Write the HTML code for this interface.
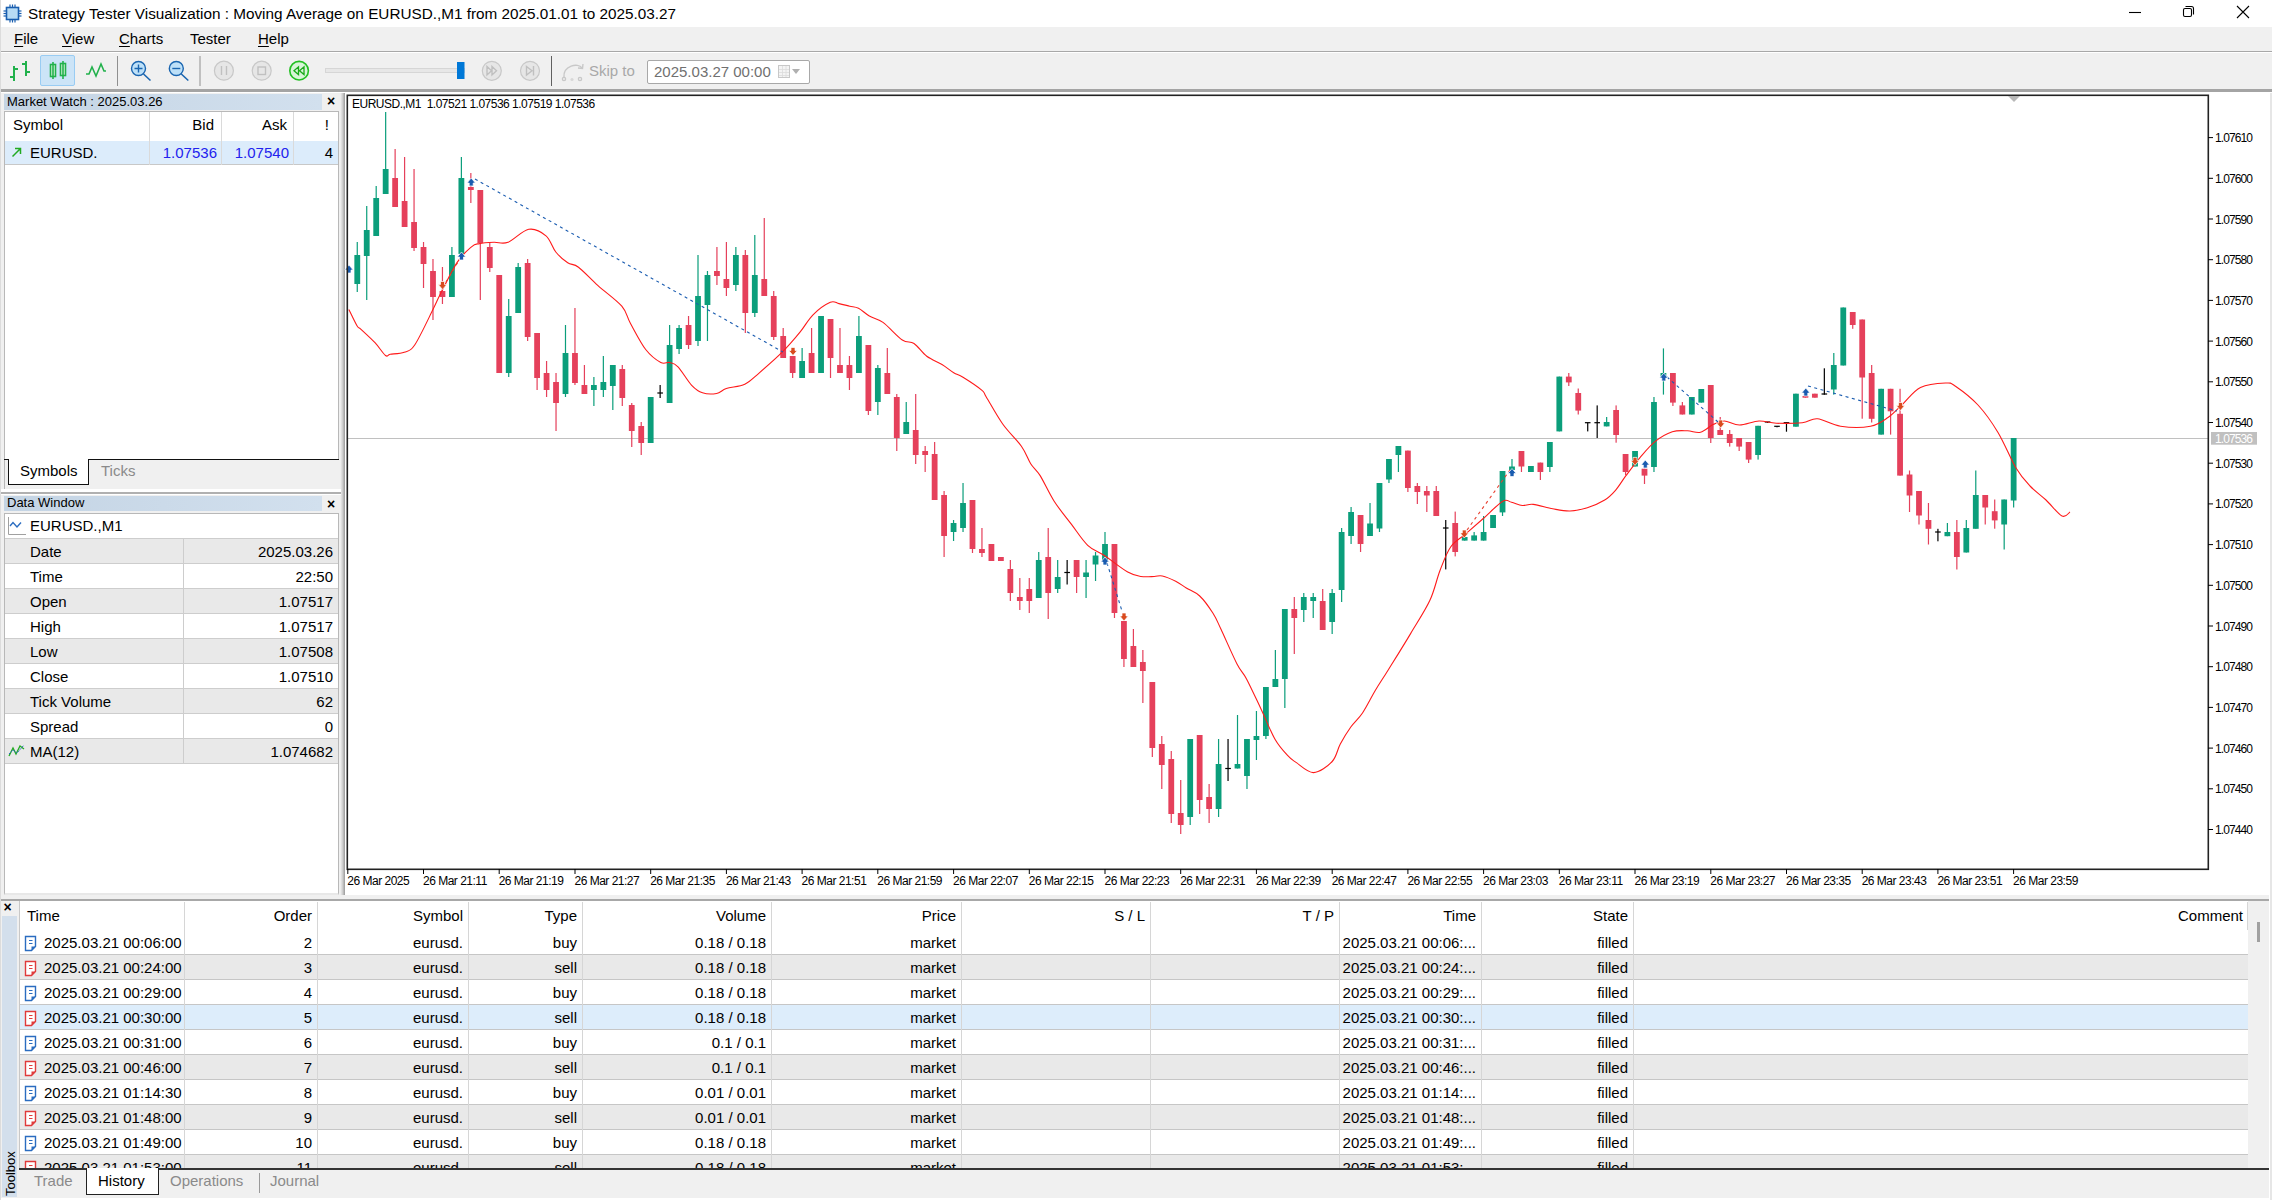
<!DOCTYPE html>
<html><head><meta charset="utf-8"><style>
*{margin:0;padding:0;box-sizing:border-box}
html,body{width:2272px;height:1200px;overflow:hidden;background:#f0f0f0;font-family:"Liberation Sans",sans-serif;color:#000}
.a{position:absolute}
.chart{position:absolute;left:0;top:0;pointer-events:none}
.ax{font-family:"Liberation Sans",sans-serif;font-size:12px;letter-spacing:-0.5px;fill:#000}
#title{left:0;top:0;width:2272px;height:27px;background:#fff}
#title .t{left:28px;top:5px;font-size:15.3px;white-space:nowrap}
.menu{top:30px;font-size:15px;white-space:nowrap}
.menu u{text-decoration:underline;text-decoration-thickness:1px;text-underline-offset:2px}
.tb{position:absolute;white-space:nowrap}
.ui{font-size:15px;white-space:nowrap;position:absolute}
.row{position:absolute;height:25px}

.ax.px{letter-spacing:-0.9px}

</style></head><body>
<div class="a" id="title">
  <svg class="a" style="left:3px;top:4px" width="19" height="19" viewBox="0 0 19 19">
    <rect x="3.5" y="3.5" width="12" height="12" fill="#b8dcf5" stroke="#1a5fb0" stroke-width="1.6"/>
    <g stroke="#1a5fb0" stroke-width="1.2">
      <line x1="7" y1="0.5" x2="7" y2="3.5"/><line x1="9.5" y1="0.5" x2="9.5" y2="3.5"/><line x1="12" y1="0.5" x2="12" y2="3.5"/>
      <line x1="7" y1="15.5" x2="7" y2="18.5"/><line x1="9.5" y1="15.5" x2="9.5" y2="18.5"/><line x1="12" y1="15.5" x2="12" y2="18.5"/>
      <line x1="0.5" y1="7" x2="3.5" y2="7"/><line x1="0.5" y1="9.5" x2="3.5" y2="9.5"/><line x1="0.5" y1="12" x2="3.5" y2="12"/>
      <line x1="15.5" y1="7" x2="18.5" y2="7"/><line x1="15.5" y1="9.5" x2="18.5" y2="9.5"/><line x1="15.5" y1="12" x2="18.5" y2="12"/>
    </g>
  </svg>
  <div class="a t">Strategy Tester Visualization : Moving Average on EURUSD.,M1 from 2025.01.01 to 2025.03.27</div>
  <svg class="a" style="left:2120px;top:0" width="152" height="27" viewBox="2120 0 152 27">
    <line x1="2129" y1="12.5" x2="2141" y2="12.5" stroke="#000" stroke-width="1.1"/>
    <rect x="2183.5" y="8.5" width="8" height="8" rx="1.5" fill="none" stroke="#000" stroke-width="1.1"/>
    <path d="M2185.5,6.5 h6 a2,2 0 0 1 2,2 v6" fill="none" stroke="#000" stroke-width="1.1"/>
    <path d="M2237,6 L2249,18 M2249,6 L2237,18" stroke="#000" stroke-width="1.1"/>
  </svg>
</div>
<div class="a" style="left:0;top:27px;width:2272px;height:24px;background:#f0f0f0"></div>
<div class="a menu" style="left:14px"><u>F</u>ile</div>
<div class="a menu" style="left:62px"><u>V</u>iew</div>
<div class="a menu" style="left:119px"><u>C</u>harts</div>
<div class="a menu" style="left:190px">Tester</div>
<div class="a menu" style="left:258px"><u>H</u>elp</div>
<div class="a" style="left:0;top:51px;width:2272px;height:1px;background:#a8a8a8"></div>
<div class="a" style="left:0;top:52px;width:2272px;height:1px;background:#fff"></div>
<!-- toolbar -->
<div class="a" style="left:40px;top:55px;width:35px;height:31px;background:#cce4f7;border:1px solid #99ccf3;border-radius:2px"></div>
<svg class="a" style="left:0;top:52px" width="820" height="38" viewBox="0 52 820 38">
  <g stroke="#22b14c" stroke-width="2" fill="none">
    <path d="M14,81 V66 M10,77 H14 M14,69 H18"/>
    <path d="M26,61 V76 M22,64 H26 M26,72 H30"/>
  </g>
  <g stroke="#22b14c" stroke-width="1.6">
    <rect x="50.5" y="64.5" width="5" height="12" fill="#dff5df"/>
    <line x1="53" y1="62" x2="53" y2="79"/>
    <rect x="60.5" y="63.5" width="5" height="12" fill="#dff5df"/>
    <line x1="63" y1="61" x2="63" y2="79"/>
  </g>
  <path d="M86,74 H89 L92,67 L96,76 L101,64 L104,71 H106" stroke="#22b14c" stroke-width="1.6" fill="none"/>
  <line x1="117.5" y1="56" x2="117.5" y2="86" stroke="#909090" stroke-width="1"/>
  <g stroke="#1a65b0" stroke-width="1.4">
    <circle cx="138.5" cy="68.5" r="7" fill="#bde0f8"/>
    <path d="M134.5,68.5 H142.5 M138.5,64.5 V72.5" />
    <path d="M143.5,74 L150.5,80.5" stroke-width="1.6"/>
    <circle cx="176.3" cy="68.5" r="7" fill="#bde0f8"/>
    <path d="M172.3,68.5 H180.3" />
    <path d="M181.3,74 L188.3,80.5" stroke-width="1.6"/>
  </g>
  <line x1="200" y1="56" x2="200" y2="86" stroke="#909090" stroke-width="1"/>
  <g stroke="#c8c8c8" stroke-width="1.2" fill="#e6e6e6">
    <circle cx="223.9" cy="70.7" r="9.5"/>
    <circle cx="261.7" cy="70.7" r="9.5"/>
    <circle cx="491.8" cy="70.8" r="9.5"/>
    <circle cx="530" cy="70.8" r="9.5"/>
  </g>
  <g stroke="#c0c0c0" stroke-width="1.4" fill="none">
    <path d="M221.5,66 V75 M226.5,66 V75"/>
    <rect x="258" y="67" width="7.5" height="7.5"/>
    <path d="M487,66.5 L491.5,70.8 L487,75 Z M492,66.5 L496.5,70.8 L492,75 Z"/>
    <path d="M526.5,66.5 L532,70.8 L526.5,75 Z M533.5,66 V75.5"/>
  </g>
  <circle cx="299.1" cy="70.7" r="9.3" stroke="#22c022" stroke-width="1.6" fill="#d8f5d8"/>
  <path d="M294,70.7 L298.5,66.8 V74.6 Z M299.5,70.7 L304,66.8 V74.6 Z" stroke="#1aaa1a" stroke-width="1.3" fill="#d8f5d8"/>
  <rect x="325.5" y="68.5" width="139" height="4" fill="#e7e7e7" stroke="#d6d6d6" stroke-width="1"/>
  <rect x="457" y="62" width="7.5" height="17" fill="#0078d7"/>
  <line x1="551.5" y1="56" x2="551.5" y2="86" stroke="#606060" stroke-width="1"/>
  <g stroke="#c8c8c8" stroke-width="1.4" fill="none">
    <path d="M564,77 C563,66 578,62 582,68"/>
    <path d="M578,68 L582.5,68.5 L583,64"/>
    <circle cx="564" cy="79" r="1.6"/>
    <circle cx="580" cy="79" r="1.6"/>
  </g>
  <circle cx="572" cy="79.5" r="1.6" fill="#d8d8d8"/>
</svg>
<div class="ui" style="left:589px;top:62px;color:#a8a8a8">Skip to</div>
<div class="a" style="left:647px;top:60px;width:163px;height:24px;background:#fff;border:1px solid #a8a8a8;border-radius:2px"></div>
<div class="ui" style="left:654px;top:63px;color:#707070">2025.03.27 00:00</div>
<svg class="a" style="left:776px;top:62px" width="30" height="20" viewBox="0 0 30 20">
  <rect x="2.5" y="3.5" width="11" height="12" fill="#f4f4f4" stroke="#c8c8c8"/>
  <path d="M3,7.5 H13 M3,10.5 H13 M3,13.5 H13 M6.5,4 V15 M10,4 V15" stroke="#dcdcdc" stroke-width="0.8"/>
  <path d="M16,7 L24,7 L20,12 Z" fill="#b0b0b0"/>
</svg>
<div class="a" style="left:0;top:89px;width:2272px;height:3px;background:#a4a4a4"></div>
<div class="a" style="left:0;top:92px;width:2272px;height:1px;background:#fff"></div>
<div class="a" style="left:0;top:93px;width:345px;height:802px;background:#f0f0f0"></div>
<div class="a" style="left:340px;top:93px;width:5px;height:802px;background:linear-gradient(90deg,#f4f4f4,#cfcfcf 50%,#9a9a9a)"></div>
<div class="a" style="left:345px;top:93px;width:2px;height:802px;background:#fff"></div>
<div class="a" style="left:4px;top:94px;width:318px;height:16px;background:linear-gradient(90deg,#c4d4e4,#d2e0ee)"></div>
<div class="ui" style="left:7px;top:94px;font-size:13px">Market Watch : 2025.03.26</div>
<div class="ui" style="left:327px;top:93px;font-size:14px;font-weight:bold">&#215;</div>
<div class="a" style="left:4px;top:111px;width:335px;height:349px;background:#fff;border:1px solid #b8b8b8;border-bottom:none"></div>
<div class="a" style="left:5px;top:141px;width:333px;height:24px;background:#dcecfb;border-bottom:1px solid #c8c8c8"></div>
<div class="a" style="left:149px;top:112px;width:1px;height:53px;background:#dadada"></div>
<div class="a" style="left:221px;top:112px;width:1px;height:53px;background:#dadada"></div>
<div class="a" style="left:293px;top:112px;width:1px;height:53px;background:#dadada"></div>
<div class="ui" style="left:13px;top:116px">Symbol</div>
<div class="ui" style="left:150px;width:64px;text-align:right;top:116px">Bid</div>
<div class="ui" style="left:222px;width:65px;text-align:right;top:116px">Ask</div>
<div class="ui" style="left:294px;width:35px;text-align:right;top:116px">!</div>
<svg class="a" style="left:11px;top:146px" width="12" height="12" viewBox="0 0 12 12"><path d="M1.5,10.5 L9.5,2.5 M4,2.5 H9.5 V8" stroke="#22aa22" stroke-width="1.5" fill="none"/></svg>
<div class="ui" style="left:30px;top:144px">EURUSD.</div>
<div class="ui" style="left:150px;width:67px;text-align:right;top:144px;color:#2222ee">1.07536</div>
<div class="ui" style="left:222px;width:67px;text-align:right;top:144px;color:#2222ee">1.07540</div>
<div class="ui" style="left:294px;width:39px;text-align:right;top:144px">4</div>
<div class="a" style="left:4px;top:459px;width:1px;height:30px;background:#b8b8b8"></div>
<div class="a" style="left:4px;top:459px;width:335px;height:1.4px;background:#111"></div>
<div class="a" style="left:8px;top:459px;width:81px;height:26px;background:#fff;border:1.4px solid #111;border-top:none"></div>
<div class="ui" style="left:20px;top:462px">Symbols</div>
<div class="ui" style="left:101px;top:462px;color:#8a8a8a">Ticks</div>
<div class="a" style="left:0;top:489px;width:341px;height:3px;background:#fff"></div>
<div class="a" style="left:0;top:492px;width:341px;height:2px;background:#b0b0b0"></div>
<div class="a" style="left:0;top:494px;width:341px;height:1px;background:#fff"></div>
<div class="a" style="left:4px;top:496px;width:318px;height:15px;background:linear-gradient(90deg,#c4d4e4,#d2e0ee)"></div>
<div class="ui" style="left:7px;top:495px;font-size:13px">Data Window</div>
<div class="ui" style="left:327px;top:495.5px;font-size:14px;font-weight:bold">&#215;</div>
<div class="a" style="left:4px;top:513px;width:335px;height:382px;background:#fff;border:1px solid #b8b8b8;border-bottom:2px solid #e8e8e8"></div>
<svg class="a" style="left:7px;top:516px" width="20" height="20" viewBox="0 0 20 20"><path d="M1.5,1 V18.5 H19" stroke="#a0a0a0" stroke-width="1" fill="none"/><path d="M3,10 L6,6.5 L10,11 L14,6.5" stroke="#2a6cc0" stroke-width="1.4" fill="none"/></svg>
<div class="ui" style="left:30px;top:517px">EURUSD.,M1</div>
<div class="a" style="left:5px;top:538px;width:333px;height:26px;background:#e9e9e9;border-top:1px solid #cdcdcd;border-bottom:1px solid #cdcdcd"></div>
<div class="a" style="left:183px;top:538px;width:1px;height:26px;background:#cdcdcd"></div>
<div class="ui" style="left:30px;top:543px">Date</div>
<div class="ui" style="left:184px;width:149px;text-align:right;top:543px">2025.03.26</div>
<div class="a" style="left:5px;top:563px;width:333px;height:26px;background:#fff;border-top:1px solid #cdcdcd;border-bottom:1px solid #cdcdcd"></div>
<div class="a" style="left:183px;top:563px;width:1px;height:26px;background:#cdcdcd"></div>
<div class="ui" style="left:30px;top:568px">Time</div>
<div class="ui" style="left:184px;width:149px;text-align:right;top:568px">22:50</div>
<div class="a" style="left:5px;top:588px;width:333px;height:26px;background:#e9e9e9;border-top:1px solid #cdcdcd;border-bottom:1px solid #cdcdcd"></div>
<div class="a" style="left:183px;top:588px;width:1px;height:26px;background:#cdcdcd"></div>
<div class="ui" style="left:30px;top:593px">Open</div>
<div class="ui" style="left:184px;width:149px;text-align:right;top:593px">1.07517</div>
<div class="a" style="left:5px;top:613px;width:333px;height:26px;background:#fff;border-top:1px solid #cdcdcd;border-bottom:1px solid #cdcdcd"></div>
<div class="a" style="left:183px;top:613px;width:1px;height:26px;background:#cdcdcd"></div>
<div class="ui" style="left:30px;top:618px">High</div>
<div class="ui" style="left:184px;width:149px;text-align:right;top:618px">1.07517</div>
<div class="a" style="left:5px;top:638px;width:333px;height:26px;background:#e9e9e9;border-top:1px solid #cdcdcd;border-bottom:1px solid #cdcdcd"></div>
<div class="a" style="left:183px;top:638px;width:1px;height:26px;background:#cdcdcd"></div>
<div class="ui" style="left:30px;top:643px">Low</div>
<div class="ui" style="left:184px;width:149px;text-align:right;top:643px">1.07508</div>
<div class="a" style="left:5px;top:663px;width:333px;height:26px;background:#fff;border-top:1px solid #cdcdcd;border-bottom:1px solid #cdcdcd"></div>
<div class="a" style="left:183px;top:663px;width:1px;height:26px;background:#cdcdcd"></div>
<div class="ui" style="left:30px;top:668px">Close</div>
<div class="ui" style="left:184px;width:149px;text-align:right;top:668px">1.07510</div>
<div class="a" style="left:5px;top:688px;width:333px;height:26px;background:#e9e9e9;border-top:1px solid #cdcdcd;border-bottom:1px solid #cdcdcd"></div>
<div class="a" style="left:183px;top:688px;width:1px;height:26px;background:#cdcdcd"></div>
<div class="ui" style="left:30px;top:693px">Tick Volume</div>
<div class="ui" style="left:184px;width:149px;text-align:right;top:693px">62</div>
<div class="a" style="left:5px;top:713px;width:333px;height:26px;background:#fff;border-top:1px solid #cdcdcd;border-bottom:1px solid #cdcdcd"></div>
<div class="a" style="left:183px;top:713px;width:1px;height:26px;background:#cdcdcd"></div>
<div class="ui" style="left:30px;top:718px">Spread</div>
<div class="ui" style="left:184px;width:149px;text-align:right;top:718px">0</div>
<div class="a" style="left:5px;top:738px;width:333px;height:26px;background:#e9e9e9;border-top:1px solid #cdcdcd;border-bottom:1px solid #cdcdcd"></div>
<div class="a" style="left:183px;top:738px;width:1px;height:26px;background:#cdcdcd"></div>
<div class="ui" style="left:30px;top:743px">MA(12)</div>
<div class="ui" style="left:184px;width:149px;text-align:right;top:743px">1.074682</div>
<svg class="a" style="left:8px;top:743px" width="18" height="16" viewBox="0 0 18 16"><path d="M1,13 L5,5 L8,11 L12,3 L16,6" stroke="#22aa22" stroke-width="1.3" fill="none"/><path d="M1,11 L5,7 L9,10 L16,2" stroke="#2a6cc0" stroke-width="1" fill="none" stroke-dasharray="2,1"/></svg>
<div class="a" style="left:0;top:895px;width:2272px;height:305px;background:#f0f0f0"></div>
<div class="a" style="left:0;top:899px;width:2270px;height:2px;background:#a8a8a8"></div>
<div class="ui" style="left:3.5px;top:899px;font-size:14px;font-weight:bold">&#215;</div>
<div class="a" style="left:2px;top:916px;width:15px;height:281px;background:#d3dfec"></div>
<div class="a" style="left:3px;top:1196px;transform:rotate(-90deg);transform-origin:0 0;font-size:13px;white-space:nowrap">Toolbox</div>
<div class="a" style="left:19px;top:901px;width:2229px;height:267px;background:#fff;border-left:1px solid #c8c8c8"></div>
<div class="a" style="left:20px;top:930px;width:2228px;height:25px;background:#fff;border-bottom:1px solid #c6c6c6;"></div>
<div class="a" style="left:20px;top:955px;width:2228px;height:25px;background:#e9e9e9;border-bottom:1px solid #c6c6c6;"></div>
<div class="a" style="left:20px;top:980px;width:2228px;height:25px;background:#fff;border-bottom:1px solid #c6c6c6;"></div>
<div class="a" style="left:20px;top:1005px;width:2228px;height:25px;background:#ddedfb;border-bottom:1px solid #c6c6c6;"></div>
<div class="a" style="left:20px;top:1030px;width:2228px;height:25px;background:#fff;border-bottom:1px solid #c6c6c6;"></div>
<div class="a" style="left:20px;top:1055px;width:2228px;height:25px;background:#e9e9e9;border-bottom:1px solid #c6c6c6;"></div>
<div class="a" style="left:20px;top:1080px;width:2228px;height:25px;background:#fff;border-bottom:1px solid #c6c6c6;"></div>
<div class="a" style="left:20px;top:1105px;width:2228px;height:25px;background:#e9e9e9;border-bottom:1px solid #c6c6c6;"></div>
<div class="a" style="left:20px;top:1130px;width:2228px;height:25px;background:#fff;border-bottom:1px solid #c6c6c6;"></div>
<div class="a" style="left:20px;top:1155px;width:2228px;height:13px;background:#e9e9e9;"></div>
<div class="a" style="left:184px;top:902px;width:1px;height:266px;background:#d6d6d6"></div>
<div class="a" style="left:317px;top:902px;width:1px;height:266px;background:#d6d6d6"></div>
<div class="a" style="left:468px;top:902px;width:1px;height:266px;background:#d6d6d6"></div>
<div class="a" style="left:582px;top:902px;width:1px;height:266px;background:#d6d6d6"></div>
<div class="a" style="left:771px;top:902px;width:1px;height:266px;background:#d6d6d6"></div>
<div class="a" style="left:961px;top:902px;width:1px;height:266px;background:#d6d6d6"></div>
<div class="a" style="left:1150px;top:902px;width:1px;height:266px;background:#d6d6d6"></div>
<div class="a" style="left:1339px;top:902px;width:1px;height:266px;background:#d6d6d6"></div>
<div class="a" style="left:1481px;top:902px;width:1px;height:266px;background:#d6d6d6"></div>
<div class="a" style="left:1633px;top:902px;width:1px;height:266px;background:#d6d6d6"></div>
<div class="a" style="left:2247px;top:902px;width:1px;height:28px;background:#d6d6d6"></div>
<div class="ui" style="left:27px;top:907px">Time</div>
<div class="ui" style="left:184px;width:128px;text-align:right;top:907px">Order</div>
<div class="ui" style="left:317px;width:146px;text-align:right;top:907px">Symbol</div>
<div class="ui" style="left:468px;width:109px;text-align:right;top:907px">Type</div>
<div class="ui" style="left:582px;width:184px;text-align:right;top:907px">Volume</div>
<div class="ui" style="left:771px;width:185px;text-align:right;top:907px">Price</div>
<div class="ui" style="left:961px;width:184px;text-align:right;top:907px">S / L</div>
<div class="ui" style="left:1150px;width:184px;text-align:right;top:907px">T / P</div>
<div class="ui" style="left:1339px;width:137px;text-align:right;top:907px">Time</div>
<div class="ui" style="left:1481px;width:147px;text-align:right;top:907px">State</div>
<div class="ui" style="left:1633px;width:610px;text-align:right;top:907px">Comment</div>
<svg class="a" style="left:23px;top:935px" width="16" height="17" viewBox="0 0 16 17"><path d="M2.5,1.5 H12.5 V11.5 L8.5,15.5 H2.5 Z" fill="#fff" stroke="#2a6cc0" stroke-width="1.4"/><path d="M6,5.5 H9.5 M6,8.5 H9.5" stroke="#2a6cc0" stroke-width="1.2"/><path d="M12.5,11.5 L8.5,15.5 V11.5 Z" fill="#2a6cc0"/></svg>
<div class="ui" style="left:44px;top:934px">2025.03.21 00:06:00</div>
<div class="ui" style="left:184px;width:128px;text-align:right;top:934px">2</div>
<div class="ui" style="left:317px;width:146px;text-align:right;top:934px">eurusd.</div>
<div class="ui" style="left:468px;width:109px;text-align:right;top:934px">buy</div>
<div class="ui" style="left:582px;width:184px;text-align:right;top:934px">0.18 / 0.18</div>
<div class="ui" style="left:771px;width:185px;text-align:right;top:934px">market</div>
<div class="ui" style="left:1339px;width:137px;text-align:right;top:934px">2025.03.21 00:06:...</div>
<div class="ui" style="left:1481px;width:147px;text-align:right;top:934px">filled</div>
<svg class="a" style="left:23px;top:960px" width="16" height="17" viewBox="0 0 16 17"><path d="M2.5,1.5 H12.5 V11.5 L8.5,15.5 H2.5 Z" fill="#fff" stroke="#e03a3a" stroke-width="1.4"/><path d="M6,5.5 H9.5 M6,8.5 H9.5" stroke="#e03a3a" stroke-width="1.2"/><path d="M12.5,11.5 L8.5,15.5 V11.5 Z" fill="#e03a3a"/></svg>
<div class="ui" style="left:44px;top:959px">2025.03.21 00:24:00</div>
<div class="ui" style="left:184px;width:128px;text-align:right;top:959px">3</div>
<div class="ui" style="left:317px;width:146px;text-align:right;top:959px">eurusd.</div>
<div class="ui" style="left:468px;width:109px;text-align:right;top:959px">sell</div>
<div class="ui" style="left:582px;width:184px;text-align:right;top:959px">0.18 / 0.18</div>
<div class="ui" style="left:771px;width:185px;text-align:right;top:959px">market</div>
<div class="ui" style="left:1339px;width:137px;text-align:right;top:959px">2025.03.21 00:24:...</div>
<div class="ui" style="left:1481px;width:147px;text-align:right;top:959px">filled</div>
<svg class="a" style="left:23px;top:985px" width="16" height="17" viewBox="0 0 16 17"><path d="M2.5,1.5 H12.5 V11.5 L8.5,15.5 H2.5 Z" fill="#fff" stroke="#2a6cc0" stroke-width="1.4"/><path d="M6,5.5 H9.5 M6,8.5 H9.5" stroke="#2a6cc0" stroke-width="1.2"/><path d="M12.5,11.5 L8.5,15.5 V11.5 Z" fill="#2a6cc0"/></svg>
<div class="ui" style="left:44px;top:984px">2025.03.21 00:29:00</div>
<div class="ui" style="left:184px;width:128px;text-align:right;top:984px">4</div>
<div class="ui" style="left:317px;width:146px;text-align:right;top:984px">eurusd.</div>
<div class="ui" style="left:468px;width:109px;text-align:right;top:984px">buy</div>
<div class="ui" style="left:582px;width:184px;text-align:right;top:984px">0.18 / 0.18</div>
<div class="ui" style="left:771px;width:185px;text-align:right;top:984px">market</div>
<div class="ui" style="left:1339px;width:137px;text-align:right;top:984px">2025.03.21 00:29:...</div>
<div class="ui" style="left:1481px;width:147px;text-align:right;top:984px">filled</div>
<svg class="a" style="left:23px;top:1010px" width="16" height="17" viewBox="0 0 16 17"><path d="M2.5,1.5 H12.5 V11.5 L8.5,15.5 H2.5 Z" fill="#fff" stroke="#e03a3a" stroke-width="1.4"/><path d="M6,5.5 H9.5 M6,8.5 H9.5" stroke="#e03a3a" stroke-width="1.2"/><path d="M12.5,11.5 L8.5,15.5 V11.5 Z" fill="#e03a3a"/></svg>
<div class="ui" style="left:44px;top:1009px">2025.03.21 00:30:00</div>
<div class="ui" style="left:184px;width:128px;text-align:right;top:1009px">5</div>
<div class="ui" style="left:317px;width:146px;text-align:right;top:1009px">eurusd.</div>
<div class="ui" style="left:468px;width:109px;text-align:right;top:1009px">sell</div>
<div class="ui" style="left:582px;width:184px;text-align:right;top:1009px">0.18 / 0.18</div>
<div class="ui" style="left:771px;width:185px;text-align:right;top:1009px">market</div>
<div class="ui" style="left:1339px;width:137px;text-align:right;top:1009px">2025.03.21 00:30:...</div>
<div class="ui" style="left:1481px;width:147px;text-align:right;top:1009px">filled</div>
<svg class="a" style="left:23px;top:1035px" width="16" height="17" viewBox="0 0 16 17"><path d="M2.5,1.5 H12.5 V11.5 L8.5,15.5 H2.5 Z" fill="#fff" stroke="#2a6cc0" stroke-width="1.4"/><path d="M6,5.5 H9.5 M6,8.5 H9.5" stroke="#2a6cc0" stroke-width="1.2"/><path d="M12.5,11.5 L8.5,15.5 V11.5 Z" fill="#2a6cc0"/></svg>
<div class="ui" style="left:44px;top:1034px">2025.03.21 00:31:00</div>
<div class="ui" style="left:184px;width:128px;text-align:right;top:1034px">6</div>
<div class="ui" style="left:317px;width:146px;text-align:right;top:1034px">eurusd.</div>
<div class="ui" style="left:468px;width:109px;text-align:right;top:1034px">buy</div>
<div class="ui" style="left:582px;width:184px;text-align:right;top:1034px">0.1 / 0.1</div>
<div class="ui" style="left:771px;width:185px;text-align:right;top:1034px">market</div>
<div class="ui" style="left:1339px;width:137px;text-align:right;top:1034px">2025.03.21 00:31:...</div>
<div class="ui" style="left:1481px;width:147px;text-align:right;top:1034px">filled</div>
<svg class="a" style="left:23px;top:1060px" width="16" height="17" viewBox="0 0 16 17"><path d="M2.5,1.5 H12.5 V11.5 L8.5,15.5 H2.5 Z" fill="#fff" stroke="#e03a3a" stroke-width="1.4"/><path d="M6,5.5 H9.5 M6,8.5 H9.5" stroke="#e03a3a" stroke-width="1.2"/><path d="M12.5,11.5 L8.5,15.5 V11.5 Z" fill="#e03a3a"/></svg>
<div class="ui" style="left:44px;top:1059px">2025.03.21 00:46:00</div>
<div class="ui" style="left:184px;width:128px;text-align:right;top:1059px">7</div>
<div class="ui" style="left:317px;width:146px;text-align:right;top:1059px">eurusd.</div>
<div class="ui" style="left:468px;width:109px;text-align:right;top:1059px">sell</div>
<div class="ui" style="left:582px;width:184px;text-align:right;top:1059px">0.1 / 0.1</div>
<div class="ui" style="left:771px;width:185px;text-align:right;top:1059px">market</div>
<div class="ui" style="left:1339px;width:137px;text-align:right;top:1059px">2025.03.21 00:46:...</div>
<div class="ui" style="left:1481px;width:147px;text-align:right;top:1059px">filled</div>
<svg class="a" style="left:23px;top:1085px" width="16" height="17" viewBox="0 0 16 17"><path d="M2.5,1.5 H12.5 V11.5 L8.5,15.5 H2.5 Z" fill="#fff" stroke="#2a6cc0" stroke-width="1.4"/><path d="M6,5.5 H9.5 M6,8.5 H9.5" stroke="#2a6cc0" stroke-width="1.2"/><path d="M12.5,11.5 L8.5,15.5 V11.5 Z" fill="#2a6cc0"/></svg>
<div class="ui" style="left:44px;top:1084px">2025.03.21 01:14:30</div>
<div class="ui" style="left:184px;width:128px;text-align:right;top:1084px">8</div>
<div class="ui" style="left:317px;width:146px;text-align:right;top:1084px">eurusd.</div>
<div class="ui" style="left:468px;width:109px;text-align:right;top:1084px">buy</div>
<div class="ui" style="left:582px;width:184px;text-align:right;top:1084px">0.01 / 0.01</div>
<div class="ui" style="left:771px;width:185px;text-align:right;top:1084px">market</div>
<div class="ui" style="left:1339px;width:137px;text-align:right;top:1084px">2025.03.21 01:14:...</div>
<div class="ui" style="left:1481px;width:147px;text-align:right;top:1084px">filled</div>
<svg class="a" style="left:23px;top:1110px" width="16" height="17" viewBox="0 0 16 17"><path d="M2.5,1.5 H12.5 V11.5 L8.5,15.5 H2.5 Z" fill="#fff" stroke="#e03a3a" stroke-width="1.4"/><path d="M6,5.5 H9.5 M6,8.5 H9.5" stroke="#e03a3a" stroke-width="1.2"/><path d="M12.5,11.5 L8.5,15.5 V11.5 Z" fill="#e03a3a"/></svg>
<div class="ui" style="left:44px;top:1109px">2025.03.21 01:48:00</div>
<div class="ui" style="left:184px;width:128px;text-align:right;top:1109px">9</div>
<div class="ui" style="left:317px;width:146px;text-align:right;top:1109px">eurusd.</div>
<div class="ui" style="left:468px;width:109px;text-align:right;top:1109px">sell</div>
<div class="ui" style="left:582px;width:184px;text-align:right;top:1109px">0.01 / 0.01</div>
<div class="ui" style="left:771px;width:185px;text-align:right;top:1109px">market</div>
<div class="ui" style="left:1339px;width:137px;text-align:right;top:1109px">2025.03.21 01:48:...</div>
<div class="ui" style="left:1481px;width:147px;text-align:right;top:1109px">filled</div>
<svg class="a" style="left:23px;top:1135px" width="16" height="17" viewBox="0 0 16 17"><path d="M2.5,1.5 H12.5 V11.5 L8.5,15.5 H2.5 Z" fill="#fff" stroke="#2a6cc0" stroke-width="1.4"/><path d="M6,5.5 H9.5 M6,8.5 H9.5" stroke="#2a6cc0" stroke-width="1.2"/><path d="M12.5,11.5 L8.5,15.5 V11.5 Z" fill="#2a6cc0"/></svg>
<div class="ui" style="left:44px;top:1134px">2025.03.21 01:49:00</div>
<div class="ui" style="left:184px;width:128px;text-align:right;top:1134px">10</div>
<div class="ui" style="left:317px;width:146px;text-align:right;top:1134px">eurusd.</div>
<div class="ui" style="left:468px;width:109px;text-align:right;top:1134px">buy</div>
<div class="ui" style="left:582px;width:184px;text-align:right;top:1134px">0.18 / 0.18</div>
<div class="ui" style="left:771px;width:185px;text-align:right;top:1134px">market</div>
<div class="ui" style="left:1339px;width:137px;text-align:right;top:1134px">2025.03.21 01:49:...</div>
<div class="ui" style="left:1481px;width:147px;text-align:right;top:1134px">filled</div>
<svg class="a" style="left:23px;top:1160px" width="16" height="17" viewBox="0 0 16 17"><path d="M2.5,1.5 H12.5 V11.5 L8.5,15.5 H2.5 Z" fill="#fff" stroke="#e03a3a" stroke-width="1.4"/><path d="M6,5.5 H9.5 M6,8.5 H9.5" stroke="#e03a3a" stroke-width="1.2"/><path d="M12.5,11.5 L8.5,15.5 V11.5 Z" fill="#e03a3a"/></svg>
<div class="ui" style="left:44px;top:1159px">2025.03.21 01:53:00</div>
<div class="ui" style="left:184px;width:128px;text-align:right;top:1159px">11</div>
<div class="ui" style="left:317px;width:146px;text-align:right;top:1159px">eurusd.</div>
<div class="ui" style="left:468px;width:109px;text-align:right;top:1159px">sell</div>
<div class="ui" style="left:582px;width:184px;text-align:right;top:1159px">0.18 / 0.18</div>
<div class="ui" style="left:771px;width:185px;text-align:right;top:1159px">market</div>
<div class="ui" style="left:1339px;width:137px;text-align:right;top:1159px">2025.03.21 01:53:...</div>
<div class="ui" style="left:1481px;width:147px;text-align:right;top:1159px">filled</div>
<div class="a" style="left:19px;top:1168px;width:2250px;height:32px;background:#f0f0f0;border-top:2px solid #333"></div>
<div class="a" style="left:0;top:1198px;width:2272px;height:2px;background:#fff"></div>
<div class="a" style="left:86px;top:1168px;width:73px;height:27px;background:#fff;border:1.5px solid #222;border-top:none"></div>
<div class="ui" style="left:34px;top:1172px;color:#8a8a8a">Trade</div>
<div class="ui" style="left:98px;top:1172px">History</div>
<div class="ui" style="left:170px;top:1172px;color:#8a8a8a">Operations</div>
<div class="a" style="left:259px;top:1173px;width:1px;height:20px;background:#999"></div>
<div class="ui" style="left:270px;top:1172px;color:#8a8a8a">Journal</div>
<div class="a" style="left:2248px;top:901px;width:21px;height:266px;background:#f0f0f0"></div>
<div class="a" style="left:2257px;top:922px;width:3px;height:20px;background:#a0a0a0"></div>
<div class="a" style="left:2269px;top:93px;width:1px;height:1107px;background:#fff"></div>
<div class="a" style="left:2270px;top:93px;width:2px;height:1107px;background:#e6e6e6"></div>
<div class="a" style="left:0;top:0;width:1px;height:1200px;background:#dcdcdc"></div>
<svg class="chart" width="2272" height="1200" viewBox="0 0 2272 1200">
<rect x="347" y="93" width="1922" height="802" fill="#fff"/>
<g><line x1="348" y1="438.5" x2="2208" y2="438.5" stroke="#c0c0c0" stroke-width="1"/>
<rect x="356.66" y="242.0" width="1.2" height="50.0" fill="#0b9e7b"/>
<rect x="354.37" y="255.0" width="5.8" height="29.0" fill="#0b9e7b"/>
<rect x="366.13" y="206.0" width="1.2" height="94.0" fill="#0b9e7b"/>
<rect x="363.83" y="230.0" width="5.8" height="26.0" fill="#0b9e7b"/>
<rect x="375.59" y="186.0" width="1.2" height="50.0" fill="#0b9e7b"/>
<rect x="373.30" y="198.0" width="5.8" height="38.0" fill="#0b9e7b"/>
<rect x="385.06" y="112.0" width="1.2" height="82.0" fill="#0b9e7b"/>
<rect x="382.76" y="169.0" width="5.8" height="25.0" fill="#0b9e7b"/>
<rect x="394.52" y="149.0" width="1.2" height="58.0" fill="#e5405b"/>
<rect x="392.23" y="178.0" width="5.8" height="29.0" fill="#e5405b"/>
<rect x="403.99" y="157.0" width="1.2" height="70.0" fill="#e5405b"/>
<rect x="401.69" y="201.0" width="5.8" height="26.0" fill="#e5405b"/>
<rect x="413.45" y="169.0" width="1.2" height="82.0" fill="#e5405b"/>
<rect x="411.16" y="222.0" width="5.8" height="26.0" fill="#e5405b"/>
<rect x="422.92" y="242.0" width="1.2" height="46.0" fill="#e5405b"/>
<rect x="420.62" y="247.0" width="5.8" height="17.0" fill="#e5405b"/>
<rect x="432.38" y="259.0" width="1.2" height="61.0" fill="#e5405b"/>
<rect x="430.09" y="271.0" width="5.8" height="26.0" fill="#e5405b"/>
<rect x="441.85" y="267.0" width="1.2" height="37.0" fill="#e5405b"/>
<rect x="439.55" y="291.0" width="5.8" height="6.0" fill="#e5405b"/>
<rect x="451.31" y="247.0" width="1.2" height="50.0" fill="#0b9e7b"/>
<rect x="449.02" y="255.0" width="5.8" height="42.0" fill="#0b9e7b"/>
<rect x="460.78" y="157.0" width="1.2" height="97.0" fill="#0b9e7b"/>
<rect x="458.48" y="178.0" width="5.8" height="76.0" fill="#0b9e7b"/>
<rect x="470.25" y="173.0" width="1.2" height="30.0" fill="#e5405b"/>
<rect x="467.95" y="187.0" width="5.8" height="3.0" fill="#e5405b"/>
<rect x="479.71" y="190.0" width="1.2" height="110.0" fill="#e5405b"/>
<rect x="477.41" y="190.0" width="5.8" height="53.0" fill="#e5405b"/>
<rect x="489.17" y="242.0" width="1.2" height="30.0" fill="#e5405b"/>
<rect x="486.88" y="247.0" width="5.8" height="21.0" fill="#e5405b"/>
<rect x="498.64" y="275.0" width="1.2" height="98.0" fill="#e5405b"/>
<rect x="496.34" y="275.0" width="5.8" height="98.0" fill="#e5405b"/>
<rect x="508.11" y="299.0" width="1.2" height="78.0" fill="#0b9e7b"/>
<rect x="505.81" y="316.0" width="5.8" height="57.0" fill="#0b9e7b"/>
<rect x="517.57" y="263.0" width="1.2" height="50.0" fill="#0b9e7b"/>
<rect x="515.27" y="267.0" width="5.8" height="46.0" fill="#0b9e7b"/>
<rect x="527.03" y="259.0" width="1.2" height="82.0" fill="#e5405b"/>
<rect x="524.74" y="263.0" width="5.8" height="74.0" fill="#e5405b"/>
<rect x="536.50" y="333.0" width="1.2" height="57.0" fill="#e5405b"/>
<rect x="534.20" y="333.0" width="5.8" height="45.0" fill="#e5405b"/>
<rect x="545.97" y="361.0" width="1.2" height="36.0" fill="#e5405b"/>
<rect x="543.67" y="373.0" width="5.8" height="17.0" fill="#e5405b"/>
<rect x="555.43" y="373.0" width="1.2" height="58.0" fill="#e5405b"/>
<rect x="553.13" y="382.0" width="5.8" height="21.0" fill="#e5405b"/>
<rect x="564.89" y="325.0" width="1.2" height="72.0" fill="#0b9e7b"/>
<rect x="562.60" y="353.0" width="5.8" height="41.0" fill="#0b9e7b"/>
<rect x="574.36" y="308.0" width="1.2" height="77.0" fill="#e5405b"/>
<rect x="572.06" y="353.0" width="5.8" height="30.0" fill="#e5405b"/>
<rect x="583.82" y="365.0" width="1.2" height="29.0" fill="#e5405b"/>
<rect x="581.52" y="385.0" width="5.8" height="9.0" fill="#e5405b"/>
<rect x="593.29" y="377.0" width="1.2" height="29.0" fill="#0b9e7b"/>
<rect x="590.99" y="385.0" width="5.8" height="5.0" fill="#0b9e7b"/>
<rect x="602.75" y="356.0" width="1.2" height="41.0" fill="#0b9e7b"/>
<rect x="600.46" y="382.0" width="5.8" height="8.0" fill="#0b9e7b"/>
<rect x="612.22" y="365.0" width="1.2" height="45.0" fill="#0b9e7b"/>
<rect x="609.92" y="365.0" width="5.8" height="21.0" fill="#0b9e7b"/>
<rect x="621.69" y="365.0" width="1.2" height="41.0" fill="#e5405b"/>
<rect x="619.39" y="369.0" width="5.8" height="29.0" fill="#e5405b"/>
<rect x="631.15" y="403.0" width="1.2" height="44.0" fill="#e5405b"/>
<rect x="628.85" y="405.0" width="5.8" height="26.0" fill="#e5405b"/>
<rect x="640.62" y="422.0" width="1.2" height="33.0" fill="#e5405b"/>
<rect x="638.32" y="426.0" width="5.8" height="17.0" fill="#e5405b"/>
<rect x="650.08" y="397.0" width="1.2" height="46.0" fill="#0b9e7b"/>
<rect x="647.78" y="397.0" width="5.8" height="46.0" fill="#0b9e7b"/>
<rect x="659.54" y="385.0" width="1.2" height="13.0" fill="#000"/>
<rect x="657.35" y="392.4" width="5.6" height="1.2" fill="#000"/>
<rect x="669.01" y="325.0" width="1.2" height="78.0" fill="#0b9e7b"/>
<rect x="666.71" y="345.0" width="5.8" height="58.0" fill="#0b9e7b"/>
<rect x="678.48" y="325.0" width="1.2" height="29.0" fill="#0b9e7b"/>
<rect x="676.18" y="328.0" width="5.8" height="21.0" fill="#0b9e7b"/>
<rect x="687.94" y="316.0" width="1.2" height="33.0" fill="#e5405b"/>
<rect x="685.64" y="325.0" width="5.8" height="20.0" fill="#e5405b"/>
<rect x="697.40" y="255.0" width="1.2" height="91.0" fill="#0b9e7b"/>
<rect x="695.11" y="296.0" width="5.8" height="45.0" fill="#0b9e7b"/>
<rect x="706.87" y="271.0" width="1.2" height="70.0" fill="#0b9e7b"/>
<rect x="704.57" y="275.0" width="5.8" height="30.0" fill="#0b9e7b"/>
<rect x="716.33" y="247.0" width="1.2" height="38.0" fill="#e5405b"/>
<rect x="714.03" y="271.0" width="5.8" height="5.0" fill="#e5405b"/>
<rect x="725.80" y="242.0" width="1.2" height="54.0" fill="#e5405b"/>
<rect x="723.50" y="279.0" width="5.8" height="9.0" fill="#e5405b"/>
<rect x="735.26" y="247.0" width="1.2" height="44.0" fill="#0b9e7b"/>
<rect x="732.97" y="255.0" width="5.8" height="30.0" fill="#0b9e7b"/>
<rect x="744.73" y="250.0" width="1.2" height="83.0" fill="#e5405b"/>
<rect x="742.43" y="255.0" width="5.8" height="58.0" fill="#e5405b"/>
<rect x="754.20" y="235.0" width="1.2" height="82.0" fill="#0b9e7b"/>
<rect x="751.90" y="275.0" width="5.8" height="38.0" fill="#0b9e7b"/>
<rect x="763.66" y="218.0" width="1.2" height="78.0" fill="#e5405b"/>
<rect x="761.36" y="279.0" width="5.8" height="17.0" fill="#e5405b"/>
<rect x="773.12" y="291.0" width="1.2" height="49.0" fill="#e5405b"/>
<rect x="770.83" y="296.0" width="5.8" height="41.0" fill="#e5405b"/>
<rect x="782.59" y="328.0" width="1.2" height="30.0" fill="#e5405b"/>
<rect x="780.29" y="336.0" width="5.8" height="22.0" fill="#e5405b"/>
<rect x="792.05" y="356.0" width="1.2" height="22.0" fill="#e5405b"/>
<rect x="789.75" y="356.0" width="5.8" height="17.0" fill="#e5405b"/>
<rect x="801.52" y="348.0" width="1.2" height="30.0" fill="#0b9e7b"/>
<rect x="799.22" y="361.0" width="5.8" height="17.0" fill="#0b9e7b"/>
<rect x="810.99" y="328.0" width="1.2" height="45.0" fill="#e5405b"/>
<rect x="808.69" y="353.0" width="5.8" height="20.0" fill="#e5405b"/>
<rect x="820.45" y="316.0" width="1.2" height="57.0" fill="#0b9e7b"/>
<rect x="818.15" y="316.0" width="5.8" height="57.0" fill="#0b9e7b"/>
<rect x="829.91" y="319.0" width="1.2" height="59.0" fill="#e5405b"/>
<rect x="827.62" y="319.0" width="5.8" height="39.0" fill="#e5405b"/>
<rect x="839.38" y="328.0" width="1.2" height="45.0" fill="#e5405b"/>
<rect x="837.08" y="365.0" width="5.8" height="8.0" fill="#e5405b"/>
<rect x="848.84" y="356.0" width="1.2" height="34.0" fill="#e5405b"/>
<rect x="846.54" y="365.0" width="5.8" height="13.0" fill="#e5405b"/>
<rect x="858.31" y="316.0" width="1.2" height="57.0" fill="#0b9e7b"/>
<rect x="856.01" y="336.0" width="5.8" height="37.0" fill="#0b9e7b"/>
<rect x="867.77" y="345.0" width="1.2" height="70.0" fill="#e5405b"/>
<rect x="865.48" y="345.0" width="5.8" height="66.0" fill="#e5405b"/>
<rect x="877.24" y="365.0" width="1.2" height="50.0" fill="#0b9e7b"/>
<rect x="874.94" y="368.0" width="5.8" height="34.0" fill="#0b9e7b"/>
<rect x="886.71" y="348.0" width="1.2" height="46.0" fill="#e5405b"/>
<rect x="884.41" y="373.0" width="5.8" height="21.0" fill="#e5405b"/>
<rect x="896.17" y="394.0" width="1.2" height="57.0" fill="#e5405b"/>
<rect x="893.87" y="397.0" width="5.8" height="41.0" fill="#e5405b"/>
<rect x="905.63" y="402.0" width="1.2" height="32.0" fill="#0b9e7b"/>
<rect x="903.33" y="422.0" width="5.8" height="12.0" fill="#0b9e7b"/>
<rect x="915.10" y="394.0" width="1.2" height="70.0" fill="#e5405b"/>
<rect x="912.80" y="430.0" width="5.8" height="25.0" fill="#e5405b"/>
<rect x="924.56" y="446.0" width="1.2" height="26.0" fill="#e5405b"/>
<rect x="922.26" y="451.0" width="5.8" height="4.0" fill="#e5405b"/>
<rect x="934.03" y="442.0" width="1.2" height="58.0" fill="#e5405b"/>
<rect x="931.73" y="454.0" width="5.8" height="46.0" fill="#e5405b"/>
<rect x="943.50" y="491.0" width="1.2" height="66.0" fill="#e5405b"/>
<rect x="941.20" y="495.0" width="5.8" height="41.0" fill="#e5405b"/>
<rect x="952.96" y="520.0" width="1.2" height="21.0" fill="#0b9e7b"/>
<rect x="950.66" y="523.0" width="5.8" height="9.0" fill="#0b9e7b"/>
<rect x="962.43" y="483.0" width="1.2" height="49.0" fill="#0b9e7b"/>
<rect x="960.13" y="503.0" width="5.8" height="25.0" fill="#0b9e7b"/>
<rect x="971.89" y="500.0" width="1.2" height="53.0" fill="#e5405b"/>
<rect x="969.59" y="500.0" width="5.8" height="49.0" fill="#e5405b"/>
<rect x="981.35" y="528.0" width="1.2" height="29.0" fill="#e5405b"/>
<rect x="979.05" y="549.0" width="5.8" height="4.0" fill="#e5405b"/>
<rect x="990.82" y="544.0" width="1.2" height="17.0" fill="#e5405b"/>
<rect x="988.52" y="544.0" width="5.8" height="17.0" fill="#e5405b"/>
<rect x="1000.28" y="557.0" width="1.2" height="4.0" fill="#e5405b"/>
<rect x="997.99" y="557.0" width="5.8" height="4.0" fill="#e5405b"/>
<rect x="1009.75" y="560.0" width="1.2" height="41.0" fill="#e5405b"/>
<rect x="1007.45" y="569.0" width="5.8" height="24.0" fill="#e5405b"/>
<rect x="1019.22" y="578.0" width="1.2" height="32.0" fill="#e5405b"/>
<rect x="1016.92" y="597.0" width="5.8" height="4.0" fill="#e5405b"/>
<rect x="1028.68" y="578.0" width="1.2" height="35.0" fill="#e5405b"/>
<rect x="1026.38" y="589.0" width="5.8" height="12.0" fill="#e5405b"/>
<rect x="1038.14" y="552.0" width="1.2" height="46.0" fill="#0b9e7b"/>
<rect x="1035.84" y="560.0" width="5.8" height="38.0" fill="#0b9e7b"/>
<rect x="1047.61" y="528.0" width="1.2" height="91.0" fill="#e5405b"/>
<rect x="1045.31" y="557.0" width="5.8" height="36.0" fill="#e5405b"/>
<rect x="1057.08" y="560.0" width="1.2" height="33.0" fill="#0b9e7b"/>
<rect x="1054.77" y="577.0" width="5.8" height="12.0" fill="#0b9e7b"/>
<rect x="1066.54" y="560.0" width="1.2" height="24.5" fill="#000"/>
<rect x="1064.34" y="571.9" width="5.6" height="1.2" fill="#000"/>
<rect x="1076.01" y="560.0" width="1.2" height="33.0" fill="#e5405b"/>
<rect x="1073.70" y="560.0" width="5.8" height="17.0" fill="#e5405b"/>
<rect x="1085.47" y="560.0" width="1.2" height="38.0" fill="#0b9e7b"/>
<rect x="1083.17" y="572.5" width="5.8" height="4.5" fill="#0b9e7b"/>
<rect x="1094.94" y="552.0" width="1.2" height="29.0" fill="#0b9e7b"/>
<rect x="1092.63" y="555.5" width="5.8" height="9.0" fill="#0b9e7b"/>
<rect x="1104.40" y="532.0" width="1.2" height="28.0" fill="#0b9e7b"/>
<rect x="1102.10" y="544.0" width="5.8" height="16.0" fill="#0b9e7b"/>
<rect x="1113.87" y="544.0" width="1.2" height="74.0" fill="#e5405b"/>
<rect x="1111.56" y="544.0" width="5.8" height="69.0" fill="#e5405b"/>
<rect x="1123.33" y="621.0" width="1.2" height="46.0" fill="#e5405b"/>
<rect x="1121.03" y="621.0" width="5.8" height="38.0" fill="#e5405b"/>
<rect x="1132.80" y="629.0" width="1.2" height="38.0" fill="#e5405b"/>
<rect x="1130.49" y="646.0" width="5.8" height="21.0" fill="#e5405b"/>
<rect x="1142.26" y="650.0" width="1.2" height="53.0" fill="#e5405b"/>
<rect x="1139.96" y="662.0" width="5.8" height="9.0" fill="#e5405b"/>
<rect x="1151.73" y="682.0" width="1.2" height="75.0" fill="#e5405b"/>
<rect x="1149.42" y="682.0" width="5.8" height="66.0" fill="#e5405b"/>
<rect x="1161.19" y="736.0" width="1.2" height="53.0" fill="#e5405b"/>
<rect x="1158.89" y="744.0" width="5.8" height="21.0" fill="#e5405b"/>
<rect x="1170.66" y="751.0" width="1.2" height="72.0" fill="#e5405b"/>
<rect x="1168.36" y="759.0" width="5.8" height="55.0" fill="#e5405b"/>
<rect x="1180.12" y="780.0" width="1.2" height="54.0" fill="#e5405b"/>
<rect x="1177.82" y="813.0" width="5.8" height="12.0" fill="#e5405b"/>
<rect x="1189.59" y="739.0" width="1.2" height="86.0" fill="#0b9e7b"/>
<rect x="1187.28" y="739.0" width="5.8" height="78.0" fill="#0b9e7b"/>
<rect x="1199.05" y="735.0" width="1.2" height="79.0" fill="#e5405b"/>
<rect x="1196.75" y="735.0" width="5.8" height="65.0" fill="#e5405b"/>
<rect x="1208.52" y="784.0" width="1.2" height="39.0" fill="#e5405b"/>
<rect x="1206.21" y="797.0" width="5.8" height="12.0" fill="#e5405b"/>
<rect x="1217.98" y="739.0" width="1.2" height="78.0" fill="#0b9e7b"/>
<rect x="1215.68" y="764.0" width="5.8" height="45.0" fill="#0b9e7b"/>
<rect x="1227.45" y="739.0" width="1.2" height="42.0" fill="#000"/>
<rect x="1225.25" y="767.9" width="5.6" height="1.2" fill="#000"/>
<rect x="1236.91" y="715.0" width="1.2" height="53.5" fill="#0b9e7b"/>
<rect x="1234.61" y="764.0" width="5.8" height="4.5" fill="#0b9e7b"/>
<rect x="1246.38" y="739.0" width="1.2" height="50.0" fill="#0b9e7b"/>
<rect x="1244.07" y="739.0" width="5.8" height="37.0" fill="#0b9e7b"/>
<rect x="1255.84" y="711.0" width="1.2" height="49.0" fill="#0b9e7b"/>
<rect x="1253.54" y="736.0" width="5.8" height="4.0" fill="#0b9e7b"/>
<rect x="1265.31" y="687.0" width="1.2" height="52.0" fill="#0b9e7b"/>
<rect x="1263.00" y="687.0" width="5.8" height="49.0" fill="#0b9e7b"/>
<rect x="1274.77" y="650.0" width="1.2" height="37.0" fill="#0b9e7b"/>
<rect x="1272.47" y="679.0" width="5.8" height="8.0" fill="#0b9e7b"/>
<rect x="1284.24" y="609.0" width="1.2" height="99.0" fill="#0b9e7b"/>
<rect x="1281.93" y="609.0" width="5.8" height="70.0" fill="#0b9e7b"/>
<rect x="1293.70" y="597.0" width="1.2" height="57.0" fill="#e5405b"/>
<rect x="1291.40" y="609.0" width="5.8" height="9.0" fill="#e5405b"/>
<rect x="1303.17" y="593.0" width="1.2" height="29.0" fill="#0b9e7b"/>
<rect x="1300.87" y="597.0" width="5.8" height="13.0" fill="#0b9e7b"/>
<rect x="1312.63" y="593.0" width="1.2" height="25.0" fill="#0b9e7b"/>
<rect x="1310.33" y="597.0" width="5.8" height="4.0" fill="#0b9e7b"/>
<rect x="1322.10" y="589.0" width="1.2" height="41.0" fill="#e5405b"/>
<rect x="1319.79" y="601.0" width="5.8" height="29.0" fill="#e5405b"/>
<rect x="1331.56" y="589.0" width="1.2" height="45.0" fill="#0b9e7b"/>
<rect x="1329.26" y="593.0" width="5.8" height="29.0" fill="#0b9e7b"/>
<rect x="1341.03" y="528.0" width="1.2" height="74.0" fill="#0b9e7b"/>
<rect x="1338.72" y="532.0" width="5.8" height="58.0" fill="#0b9e7b"/>
<rect x="1350.49" y="507.0" width="1.2" height="37.0" fill="#0b9e7b"/>
<rect x="1348.19" y="512.0" width="5.8" height="24.0" fill="#0b9e7b"/>
<rect x="1359.96" y="515.0" width="1.2" height="37.0" fill="#e5405b"/>
<rect x="1357.65" y="515.0" width="5.8" height="29.0" fill="#e5405b"/>
<rect x="1369.42" y="503.0" width="1.2" height="33.0" fill="#0b9e7b"/>
<rect x="1367.12" y="523.5" width="5.8" height="12.5" fill="#0b9e7b"/>
<rect x="1378.88" y="483.0" width="1.2" height="49.0" fill="#0b9e7b"/>
<rect x="1376.58" y="483.0" width="5.8" height="45.5" fill="#0b9e7b"/>
<rect x="1388.35" y="459.0" width="1.2" height="24.0" fill="#0b9e7b"/>
<rect x="1386.05" y="459.0" width="5.8" height="20.5" fill="#0b9e7b"/>
<rect x="1397.82" y="446.0" width="1.2" height="26.0" fill="#0b9e7b"/>
<rect x="1395.51" y="446.0" width="5.8" height="9.0" fill="#0b9e7b"/>
<rect x="1407.28" y="450.6" width="1.2" height="41.4" fill="#e5405b"/>
<rect x="1404.98" y="450.6" width="5.8" height="37.4" fill="#e5405b"/>
<rect x="1416.75" y="483.0" width="1.2" height="21.0" fill="#e5405b"/>
<rect x="1414.44" y="486.0" width="5.8" height="6.0" fill="#e5405b"/>
<rect x="1426.21" y="486.0" width="1.2" height="26.0" fill="#e5405b"/>
<rect x="1423.91" y="491.0" width="5.8" height="4.5" fill="#e5405b"/>
<rect x="1435.67" y="486.0" width="1.2" height="30.0" fill="#e5405b"/>
<rect x="1433.37" y="491.0" width="5.8" height="25.0" fill="#e5405b"/>
<rect x="1445.14" y="520.0" width="1.2" height="49.4" fill="#000"/>
<rect x="1442.94" y="527.4" width="5.6" height="1.2" fill="#000"/>
<rect x="1454.61" y="511.6" width="1.2" height="44.8" fill="#e5405b"/>
<rect x="1452.30" y="523.0" width="5.8" height="29.0" fill="#e5405b"/>
<rect x="1464.07" y="533.7" width="1.2" height="6.9" fill="#0b9e7b"/>
<rect x="1461.77" y="537.0" width="5.8" height="3.6" fill="#0b9e7b"/>
<rect x="1473.54" y="532.0" width="1.2" height="8.6" fill="#0b9e7b"/>
<rect x="1471.23" y="535.4" width="5.8" height="5.2" fill="#0b9e7b"/>
<rect x="1483.00" y="516.0" width="1.2" height="24.6" fill="#0b9e7b"/>
<rect x="1480.70" y="532.0" width="5.8" height="8.6" fill="#0b9e7b"/>
<rect x="1492.46" y="515.0" width="1.2" height="13.0" fill="#0b9e7b"/>
<rect x="1490.16" y="515.0" width="5.8" height="13.0" fill="#0b9e7b"/>
<rect x="1501.93" y="471.0" width="1.2" height="45.0" fill="#0b9e7b"/>
<rect x="1499.63" y="471.0" width="5.8" height="41.4" fill="#0b9e7b"/>
<rect x="1511.39" y="459.0" width="1.2" height="11.0" fill="#0b9e7b"/>
<rect x="1509.09" y="466.5" width="5.8" height="3.5" fill="#0b9e7b"/>
<rect x="1520.86" y="451.0" width="1.2" height="21.0" fill="#e5405b"/>
<rect x="1518.56" y="451.0" width="5.8" height="15.5" fill="#e5405b"/>
<rect x="1530.33" y="466.0" width="1.2" height="6.0" fill="#0b9e7b"/>
<rect x="1528.02" y="466.0" width="5.8" height="6.0" fill="#0b9e7b"/>
<rect x="1539.79" y="462.6" width="1.2" height="17.4" fill="#e5405b"/>
<rect x="1537.49" y="462.6" width="5.8" height="9.4" fill="#e5405b"/>
<rect x="1549.26" y="442.0" width="1.2" height="30.0" fill="#0b9e7b"/>
<rect x="1546.95" y="442.0" width="5.8" height="25.0" fill="#0b9e7b"/>
<rect x="1558.72" y="376.6" width="1.2" height="54.8" fill="#0b9e7b"/>
<rect x="1556.42" y="376.6" width="5.8" height="54.8" fill="#0b9e7b"/>
<rect x="1568.18" y="373.0" width="1.2" height="13.0" fill="#e5405b"/>
<rect x="1565.88" y="376.6" width="5.8" height="5.8" fill="#e5405b"/>
<rect x="1577.65" y="388.5" width="1.2" height="26.0" fill="#e5405b"/>
<rect x="1575.35" y="393.0" width="5.8" height="17.6" fill="#e5405b"/>
<rect x="1587.12" y="422.7" width="1.2" height="8.7" fill="#000"/>
<rect x="1584.91" y="422.1" width="5.6" height="1.2" fill="#000"/>
<rect x="1596.58" y="405.4" width="1.2" height="32.6" fill="#000"/>
<rect x="1594.38" y="422.1" width="5.6" height="1.2" fill="#000"/>
<rect x="1606.05" y="417.0" width="1.2" height="9.4" fill="#0b9e7b"/>
<rect x="1603.74" y="422.0" width="5.8" height="4.4" fill="#0b9e7b"/>
<rect x="1615.51" y="405.4" width="1.2" height="37.3" fill="#e5405b"/>
<rect x="1613.21" y="410.0" width="5.8" height="25.0" fill="#e5405b"/>
<rect x="1624.98" y="454.0" width="1.2" height="21.0" fill="#e5405b"/>
<rect x="1622.67" y="454.0" width="5.8" height="18.0" fill="#e5405b"/>
<rect x="1634.44" y="451.0" width="1.2" height="15.5" fill="#0b9e7b"/>
<rect x="1632.14" y="451.0" width="5.8" height="15.5" fill="#0b9e7b"/>
<rect x="1643.90" y="468.7" width="1.2" height="15.3" fill="#e5405b"/>
<rect x="1641.60" y="468.7" width="5.8" height="6.9" fill="#e5405b"/>
<rect x="1653.37" y="397.0" width="1.2" height="75.0" fill="#0b9e7b"/>
<rect x="1651.07" y="402.0" width="5.8" height="65.0" fill="#0b9e7b"/>
<rect x="1662.84" y="348.4" width="1.2" height="46.2" fill="#0b9e7b"/>
<rect x="1660.53" y="373.0" width="5.8" height="3.6" fill="#0b9e7b"/>
<rect x="1672.30" y="373.0" width="1.2" height="33.0" fill="#e5405b"/>
<rect x="1670.00" y="373.0" width="5.8" height="29.6" fill="#e5405b"/>
<rect x="1681.77" y="402.0" width="1.2" height="12.5" fill="#e5405b"/>
<rect x="1679.46" y="405.4" width="5.8" height="9.1" fill="#e5405b"/>
<rect x="1691.23" y="397.0" width="1.2" height="17.5" fill="#0b9e7b"/>
<rect x="1688.93" y="397.0" width="5.8" height="17.5" fill="#0b9e7b"/>
<rect x="1700.69" y="389.0" width="1.2" height="13.6" fill="#0b9e7b"/>
<rect x="1698.39" y="389.0" width="5.8" height="13.6" fill="#0b9e7b"/>
<rect x="1710.16" y="385.0" width="1.2" height="58.0" fill="#e5405b"/>
<rect x="1707.86" y="385.0" width="5.8" height="53.0" fill="#e5405b"/>
<rect x="1719.62" y="417.0" width="1.2" height="18.0" fill="#e5405b"/>
<rect x="1717.32" y="430.0" width="5.8" height="5.0" fill="#e5405b"/>
<rect x="1729.09" y="430.0" width="1.2" height="16.6" fill="#e5405b"/>
<rect x="1726.79" y="434.0" width="5.8" height="9.0" fill="#e5405b"/>
<rect x="1738.56" y="438.0" width="1.2" height="13.0" fill="#e5405b"/>
<rect x="1736.25" y="438.0" width="5.8" height="8.6" fill="#e5405b"/>
<rect x="1748.02" y="442.0" width="1.2" height="21.0" fill="#e5405b"/>
<rect x="1745.72" y="442.0" width="5.8" height="17.6" fill="#e5405b"/>
<rect x="1757.49" y="425.8" width="1.2" height="33.8" fill="#0b9e7b"/>
<rect x="1755.18" y="425.8" width="5.8" height="29.2" fill="#0b9e7b"/>
<rect x="1766.95" y="422.0" width="1.2" height="1.0" fill="#000"/>
<rect x="1764.75" y="421.4" width="5.6" height="1.2" fill="#000"/>
<rect x="1776.41" y="426.3" width="1.2" height="1.0" fill="#000"/>
<rect x="1774.21" y="425.7" width="5.6" height="1.2" fill="#000"/>
<rect x="1785.88" y="422.7" width="1.2" height="9.0" fill="#000"/>
<rect x="1783.68" y="422.1" width="5.6" height="1.2" fill="#000"/>
<rect x="1795.35" y="393.7" width="1.2" height="33.0" fill="#0b9e7b"/>
<rect x="1793.04" y="393.7" width="5.8" height="33.0" fill="#0b9e7b"/>
<rect x="1804.81" y="396.0" width="1.2" height="1.7" fill="#e5405b"/>
<rect x="1802.51" y="396.0" width="5.8" height="1.7" fill="#e5405b"/>
<rect x="1814.28" y="393.7" width="1.2" height="4.0" fill="#e5405b"/>
<rect x="1811.97" y="393.7" width="5.8" height="4.0" fill="#e5405b"/>
<rect x="1823.74" y="368.3" width="1.2" height="26.4" fill="#000"/>
<rect x="1821.54" y="393.4" width="5.6" height="1.2" fill="#000"/>
<rect x="1833.20" y="353.0" width="1.2" height="41.7" fill="#0b9e7b"/>
<rect x="1830.90" y="365.0" width="5.8" height="24.5" fill="#0b9e7b"/>
<rect x="1842.67" y="307.5" width="1.2" height="58.0" fill="#0b9e7b"/>
<rect x="1840.37" y="307.5" width="5.8" height="58.0" fill="#0b9e7b"/>
<rect x="1852.13" y="312.0" width="1.2" height="16.8" fill="#e5405b"/>
<rect x="1849.83" y="312.0" width="5.8" height="13.0" fill="#e5405b"/>
<rect x="1861.60" y="319.5" width="1.2" height="99.2" fill="#e5405b"/>
<rect x="1859.30" y="319.5" width="5.8" height="58.0" fill="#e5405b"/>
<rect x="1871.07" y="365.0" width="1.2" height="57.5" fill="#e5405b"/>
<rect x="1868.76" y="373.0" width="5.8" height="45.8" fill="#e5405b"/>
<rect x="1880.53" y="388.8" width="1.2" height="45.8" fill="#0b9e7b"/>
<rect x="1878.23" y="388.8" width="5.8" height="45.8" fill="#0b9e7b"/>
<rect x="1890.00" y="388.8" width="1.2" height="45.8" fill="#e5405b"/>
<rect x="1887.69" y="388.8" width="5.8" height="22.5" fill="#e5405b"/>
<rect x="1899.46" y="388.8" width="1.2" height="86.8" fill="#e5405b"/>
<rect x="1897.16" y="413.8" width="5.8" height="61.8" fill="#e5405b"/>
<rect x="1908.92" y="470.5" width="1.2" height="41.5" fill="#e5405b"/>
<rect x="1906.62" y="474.5" width="5.8" height="21.0" fill="#e5405b"/>
<rect x="1918.39" y="491.0" width="1.2" height="33.5" fill="#e5405b"/>
<rect x="1916.09" y="491.0" width="5.8" height="24.5" fill="#e5405b"/>
<rect x="1927.86" y="503.0" width="1.2" height="41.5" fill="#e5405b"/>
<rect x="1925.55" y="520.0" width="5.8" height="8.8" fill="#e5405b"/>
<rect x="1937.32" y="528.8" width="1.2" height="12.5" fill="#000"/>
<rect x="1935.12" y="531.4" width="5.6" height="1.2" fill="#000"/>
<rect x="1946.79" y="523.0" width="1.2" height="13.2" fill="#0b9e7b"/>
<rect x="1944.48" y="532.0" width="5.8" height="4.2" fill="#0b9e7b"/>
<rect x="1956.25" y="520.0" width="1.2" height="49.5" fill="#e5405b"/>
<rect x="1953.95" y="532.0" width="5.8" height="25.0" fill="#e5405b"/>
<rect x="1965.71" y="520.0" width="1.2" height="32.5" fill="#0b9e7b"/>
<rect x="1963.41" y="528.0" width="5.8" height="24.5" fill="#0b9e7b"/>
<rect x="1975.18" y="470.5" width="1.2" height="58.2" fill="#0b9e7b"/>
<rect x="1972.88" y="495.0" width="5.8" height="33.8" fill="#0b9e7b"/>
<rect x="1984.64" y="495.0" width="1.2" height="29.5" fill="#e5405b"/>
<rect x="1982.34" y="495.0" width="5.8" height="12.5" fill="#e5405b"/>
<rect x="1994.11" y="499.5" width="1.2" height="29.2" fill="#e5405b"/>
<rect x="1991.81" y="511.2" width="5.8" height="9.2" fill="#e5405b"/>
<rect x="2003.58" y="499.5" width="1.2" height="50.0" fill="#0b9e7b"/>
<rect x="2001.27" y="499.5" width="5.8" height="25.0" fill="#0b9e7b"/>
<rect x="2013.04" y="438.0" width="1.2" height="69.5" fill="#0b9e7b"/>
<rect x="2010.74" y="438.0" width="5.8" height="62.5" fill="#0b9e7b"/>
<path d="M348.8,309.4 C350.2,312.1 355.0,322.5 357.0,325.8 C359.0,329.1 358.0,326.5 361.0,329.3 C364.0,332.1 370.9,338.3 375.0,342.7 C379.1,347.1 383.0,353.6 385.5,355.5 C388.0,357.4 387.1,354.9 390.2,354.3 C393.3,353.8 400.1,353.8 404.2,352.2 C408.3,350.6 409.8,352.2 414.7,345.0 C419.6,337.8 429.1,317.2 433.3,308.8 C437.5,300.4 436.1,302.5 440.0,294.8 C443.9,287.1 451.8,270.6 457.0,262.6 C462.2,254.6 467.8,250.0 471.5,246.8 C475.2,243.6 475.6,244.3 479.4,243.6 C483.1,242.8 489.2,242.5 494.0,242.3 C498.8,242.1 502.2,244.5 508.0,242.3 C513.8,240.1 522.4,230.4 528.7,229.3 C535.0,228.2 541.5,232.0 546.0,235.8 C550.5,239.6 552.2,247.5 555.8,252.0 C559.4,256.5 563.9,260.3 567.7,262.8 C571.5,265.3 573.5,263.4 578.5,267.2 C583.5,271.0 590.8,279.1 598.0,285.6 C605.2,292.1 616.4,299.9 621.8,306.2 C627.2,312.5 626.5,316.3 630.5,323.5 C634.5,330.7 640.7,343.0 645.7,349.5 C650.8,356.0 656.8,360.3 660.8,362.5 C664.8,364.7 666.6,361.8 669.5,362.5 C672.4,363.2 674.3,363.0 678.0,366.8 C681.7,370.6 687.6,381.0 691.7,385.3 C695.8,389.6 698.4,391.4 702.5,392.8 C706.6,394.2 712.6,394.2 716.6,393.5 C720.6,392.8 721.6,390.1 726.3,388.5 C731.0,386.9 739.4,386.7 744.8,384.2 C750.2,381.7 752.5,378.7 758.8,373.3 C765.1,367.9 775.8,358.6 782.7,351.7 C789.6,344.8 795.0,338.3 800.0,332.2 C805.0,326.1 808.0,319.8 813.0,314.8 C818.0,309.8 826.0,304.2 830.3,302.3 C834.6,300.4 835.8,303.0 839.0,303.6 C842.2,304.2 846.5,305.4 849.8,306.2 C853.0,307.0 855.2,306.7 858.5,308.3 C861.8,309.9 865.2,313.6 869.3,316.0 C873.4,318.4 877.5,318.4 883.0,322.4 C888.5,326.4 897.1,336.5 902.3,340.0 C907.5,343.5 909.9,340.8 914.0,343.5 C918.1,346.2 922.1,352.8 926.8,356.3 C931.5,359.8 937.5,361.8 942.0,364.5 C946.5,367.2 950.2,370.6 953.7,372.7 C957.2,374.8 958.3,374.4 963.0,377.3 C967.7,380.2 977.8,386.9 981.7,390.2 C985.6,393.5 982.9,391.6 986.4,397.2 C989.9,402.8 996.9,415.8 1002.7,424.0 C1008.5,432.2 1016.7,439.6 1021.4,446.2 C1026.1,452.8 1027.6,458.8 1030.7,463.7 C1033.8,468.6 1036.1,469.2 1040.0,475.4 C1043.9,481.6 1048.8,492.8 1054.0,501.0 C1059.2,509.2 1065.9,517.0 1071.5,524.4 C1077.1,531.8 1082.1,540.0 1087.7,545.3 C1093.3,550.6 1098.3,551.5 1105.0,556.0 C1111.7,560.5 1121.7,568.6 1127.7,572.0 C1133.7,575.4 1136.6,575.8 1141.0,576.5 C1145.4,577.2 1150.8,576.6 1154.3,576.5 C1157.8,576.4 1158.7,575.2 1162.3,576.0 C1165.9,576.8 1171.7,579.3 1175.7,581.3 C1179.7,583.3 1182.3,585.5 1186.3,588.0 C1190.3,590.5 1195.2,591.8 1199.7,596.0 C1204.2,600.2 1209.5,607.8 1213.0,613.3 C1216.5,618.8 1217.0,620.8 1221.0,629.3 C1225.0,637.8 1232.8,655.8 1237.0,664.0 C1241.2,672.2 1242.4,671.2 1246.4,678.7 C1250.4,686.2 1256.2,698.9 1261.0,709.0 C1265.8,719.1 1270.5,731.5 1275.0,739.3 C1279.5,747.1 1284.3,751.9 1287.8,755.7 C1291.3,759.6 1291.7,759.6 1296.0,762.4 C1300.3,765.2 1307.5,772.8 1313.5,772.6 C1319.5,772.5 1327.7,766.3 1332.2,761.5 C1336.7,756.7 1337.2,749.8 1340.3,744.0 C1343.4,738.2 1347.1,732.2 1350.8,727.0 C1354.5,721.8 1358.4,719.1 1362.5,713.0 C1366.6,706.9 1371.1,697.5 1375.4,690.3 C1379.7,683.1 1382.3,679.5 1388.2,670.0 C1394.1,660.5 1403.7,645.2 1410.6,633.6 C1417.5,622.0 1424.9,611.1 1429.8,600.6 C1434.7,590.1 1436.5,579.5 1440.0,570.5 C1443.5,561.5 1446.5,552.8 1450.8,546.7 C1455.1,540.6 1460.6,538.4 1466.0,533.7 C1471.4,529.0 1477.2,523.9 1483.3,518.5 C1489.4,513.1 1498.1,503.9 1502.8,501.2 C1507.5,498.5 1508.2,501.6 1511.5,502.3 C1514.8,503.0 1518.7,505.1 1522.3,505.5 C1525.9,505.9 1528.1,503.8 1533.2,504.4 C1538.3,504.9 1546.6,507.7 1552.7,508.8 C1558.8,509.9 1564.2,511.2 1570.0,511.0 C1575.8,510.8 1581.5,509.5 1587.3,507.7 C1593.1,505.9 1600.0,502.9 1604.7,500.0 C1609.4,497.1 1611.9,494.4 1615.5,490.3 C1619.1,486.2 1622.2,480.6 1626.3,475.2 C1630.3,469.8 1635.0,463.4 1639.8,457.8 C1644.6,452.2 1649.6,445.9 1655.0,441.6 C1660.4,437.3 1666.9,433.6 1672.3,431.8 C1677.7,430.0 1682.8,430.7 1687.5,430.8 C1692.2,430.9 1696.2,433.4 1700.5,432.3 C1704.8,431.2 1709.5,426.2 1713.5,424.3 C1717.5,422.4 1720.0,420.9 1724.3,421.0 C1728.6,421.1 1733.7,425.0 1739.5,425.0 C1745.3,425.0 1752.9,421.3 1759.0,421.0 C1765.1,420.7 1769.1,422.9 1776.3,423.2 C1783.5,423.5 1795.4,423.4 1802.3,422.7 C1809.2,422.0 1811.1,418.2 1817.5,418.8 C1823.9,419.4 1831.7,425.0 1840.5,426.2 C1849.3,427.5 1862.6,427.7 1870.5,426.2 C1878.4,424.8 1882.6,421.2 1888.0,417.5 C1893.4,413.8 1897.6,408.8 1903.0,403.8 C1908.4,398.8 1913.4,391.0 1920.5,387.5 C1927.6,384.0 1939.7,383.2 1945.5,383.0 C1951.3,382.8 1950.1,382.6 1955.5,386.2 C1960.9,389.9 1970.9,397.3 1978.0,405.0 C1985.1,412.7 1991.7,422.0 1998.0,432.5 C2004.3,443.0 2010.7,459.1 2016.0,468.0 C2021.3,476.9 2025.0,480.7 2030.0,486.0 C2035.0,491.3 2040.7,495.0 2046.0,500.0 C2051.3,505.0 2058.0,514.0 2062.0,516.0 C2066.0,518.0 2068.7,512.7 2070.0,512.0" fill="none" stroke="#ff1a1a" stroke-width="1.1"/></g>
<g><line x1="475" y1="179" x2="783" y2="352" stroke="#1a5cb0" stroke-width="1.1" stroke-dasharray="3,3.5"/>
<line x1="446" y1="282" x2="458" y2="262" stroke="#e84030" stroke-width="1.1" stroke-dasharray="3,3.5"/>
<line x1="1107" y1="563" x2="1122" y2="611" stroke="#1a5cb0" stroke-width="1.1" stroke-dasharray="3,3.5"/>
<line x1="1467" y1="530" x2="1510" y2="470" stroke="#e84030" stroke-width="1.1" stroke-dasharray="3,3.5"/>
<line x1="1667" y1="377" x2="1718" y2="422" stroke="#1a5cb0" stroke-width="1.1" stroke-dasharray="3,3.5"/>
<line x1="1808" y1="386" x2="1897" y2="411" stroke="#1a5cb0" stroke-width="1.1" stroke-dasharray="3,3.5"/>
<path d="M349.0,265.0 L353.2,270.0 L351.0,270.0 L351.0,273.0 L347.0,273.0 L347.0,270.0 L344.8,270.0 Z" fill="#1a5cb0" stroke="#fff" stroke-width="0.7"/>
<path d="M461.5,252.0 L465.7,257.0 L463.5,257.0 L463.5,260.0 L459.5,260.0 L459.5,257.0 L457.3,257.0 Z" fill="#1a5cb0" stroke="#fff" stroke-width="0.7"/>
<path d="M471.2,178.0 L475.4,183.0 L473.2,183.0 L473.2,186.0 L469.2,186.0 L469.2,183.0 L467.0,183.0 Z" fill="#1a5cb0" stroke="#fff" stroke-width="0.7"/>
<path d="M793.0,355.5 L797.2,350.5 L795.0,350.5 L795.0,347.5 L791.0,347.5 L791.0,350.5 L788.8,350.5 Z" fill="#d94a1e" stroke="#fff" stroke-width="0.7"/>
<path d="M442.5,289.5 L446.7,284.5 L444.5,284.5 L444.5,281.5 L440.5,281.5 L440.5,284.5 L438.3,284.5 Z" fill="#d94a1e" stroke="#fff" stroke-width="0.7"/>
<path d="M1105.0,557.0 L1109.2,562.0 L1107.0,562.0 L1107.0,565.0 L1103.0,565.0 L1103.0,562.0 L1100.8,562.0 Z" fill="#1a5cb0" stroke="#fff" stroke-width="0.7"/>
<path d="M1124.0,621.0 L1128.2,616.0 L1126.0,616.0 L1126.0,613.0 L1122.0,613.0 L1122.0,616.0 L1119.8,616.0 Z" fill="#d94a1e" stroke="#fff" stroke-width="0.7"/>
<path d="M1464.3,538.0 L1468.5,533.0 L1466.3,533.0 L1466.3,530.0 L1462.3,530.0 L1462.3,533.0 L1460.1,533.0 Z" fill="#d94a1e" stroke="#fff" stroke-width="0.7"/>
<path d="M1512.0,468.5 L1516.2,473.5 L1514.0,473.5 L1514.0,476.5 L1510.0,476.5 L1510.0,473.5 L1507.8,473.5 Z" fill="#1a5cb0" stroke="#fff" stroke-width="0.7"/>
<path d="M1635.0,465.4 L1639.2,460.4 L1637.0,460.4 L1637.0,457.4 L1633.0,457.4 L1633.0,460.4 L1630.8,460.4 Z" fill="#d94a1e" stroke="#fff" stroke-width="0.7"/>
<path d="M1645.3,460.0 L1649.5,465.0 L1647.3,465.0 L1647.3,468.0 L1643.3,468.0 L1643.3,465.0 L1641.1,465.0 Z" fill="#1a5cb0" stroke="#fff" stroke-width="0.7"/>
<path d="M1663.8,373.0 L1668.0,378.0 L1665.8,378.0 L1665.8,381.0 L1661.8,381.0 L1661.8,378.0 L1659.6,378.0 Z" fill="#1a5cb0" stroke="#fff" stroke-width="0.7"/>
<path d="M1720.7,428.0 L1724.9,423.0 L1722.7,423.0 L1722.7,420.0 L1718.7,420.0 L1718.7,423.0 L1716.5,423.0 Z" fill="#d94a1e" stroke="#fff" stroke-width="0.7"/>
<path d="M1805.8,388.0 L1810.0,393.0 L1807.8,393.0 L1807.8,396.0 L1803.8,396.0 L1803.8,393.0 L1801.6,393.0 Z" fill="#1a5cb0" stroke="#fff" stroke-width="0.7"/>
<path d="M1900.5,410.5 L1904.7,405.5 L1902.5,405.5 L1902.5,402.5 L1898.5,402.5 L1898.5,405.5 L1896.3,405.5 Z" fill="#d94a1e" stroke="#fff" stroke-width="0.7"/></g>
<rect x="347.3" y="95.3" width="1861" height="774" fill="none" stroke="#222" stroke-width="1.6"/>
<text x="352" y="107.5" class="ax">EURUSD.,M1&#160;&#160;1.07521 1.07536 1.07519 1.07536</text>
<path d="M2008,96 L2020,96 L2014,102 Z" fill="#b8b8b8"/>
<line x1="2208" y1="137.6" x2="2213" y2="137.6" stroke="#000" stroke-width="1"/>
<text x="2215" y="142.1" class="ax px">1.07610</text>
<line x1="2208" y1="178.3" x2="2213" y2="178.3" stroke="#000" stroke-width="1"/>
<text x="2215" y="182.8" class="ax px">1.07600</text>
<line x1="2208" y1="219.0" x2="2213" y2="219.0" stroke="#000" stroke-width="1"/>
<text x="2215" y="223.5" class="ax px">1.07590</text>
<line x1="2208" y1="259.7" x2="2213" y2="259.7" stroke="#000" stroke-width="1"/>
<text x="2215" y="264.2" class="ax px">1.07580</text>
<line x1="2208" y1="300.4" x2="2213" y2="300.4" stroke="#000" stroke-width="1"/>
<text x="2215" y="304.9" class="ax px">1.07570</text>
<line x1="2208" y1="341.1" x2="2213" y2="341.1" stroke="#000" stroke-width="1"/>
<text x="2215" y="345.6" class="ax px">1.07560</text>
<line x1="2208" y1="381.8" x2="2213" y2="381.8" stroke="#000" stroke-width="1"/>
<text x="2215" y="386.3" class="ax px">1.07550</text>
<line x1="2208" y1="422.5" x2="2213" y2="422.5" stroke="#000" stroke-width="1"/>
<text x="2215" y="427.0" class="ax px">1.07540</text>
<line x1="2208" y1="463.2" x2="2213" y2="463.2" stroke="#000" stroke-width="1"/>
<text x="2215" y="467.7" class="ax px">1.07530</text>
<line x1="2208" y1="503.9" x2="2213" y2="503.9" stroke="#000" stroke-width="1"/>
<text x="2215" y="508.4" class="ax px">1.07520</text>
<line x1="2208" y1="544.6" x2="2213" y2="544.6" stroke="#000" stroke-width="1"/>
<text x="2215" y="549.1" class="ax px">1.07510</text>
<line x1="2208" y1="585.3" x2="2213" y2="585.3" stroke="#000" stroke-width="1"/>
<text x="2215" y="589.8" class="ax px">1.07500</text>
<line x1="2208" y1="626.0" x2="2213" y2="626.0" stroke="#000" stroke-width="1"/>
<text x="2215" y="630.5" class="ax px">1.07490</text>
<line x1="2208" y1="666.7" x2="2213" y2="666.7" stroke="#000" stroke-width="1"/>
<text x="2215" y="671.2" class="ax px">1.07480</text>
<line x1="2208" y1="707.4" x2="2213" y2="707.4" stroke="#000" stroke-width="1"/>
<text x="2215" y="711.9" class="ax px">1.07470</text>
<line x1="2208" y1="748.1" x2="2213" y2="748.1" stroke="#000" stroke-width="1"/>
<text x="2215" y="752.6" class="ax px">1.07460</text>
<line x1="2208" y1="788.8" x2="2213" y2="788.8" stroke="#000" stroke-width="1"/>
<text x="2215" y="793.3" class="ax px">1.07450</text>
<line x1="2208" y1="829.5" x2="2213" y2="829.5" stroke="#000" stroke-width="1"/>
<text x="2215" y="834.0" class="ax px">1.07440</text>
<rect x="2211" y="432" width="46" height="12.7" fill="#c0c0c0"/>
<text x="2215" y="442.5" class="ax px" style="fill:#fff">1.07536</text>
<line x1="347.8" y1="869" x2="347.8" y2="874" stroke="#000" stroke-width="1"/>
<text x="347.3" y="885" class="ax">26 Mar 2025</text>
<line x1="423.5" y1="869" x2="423.5" y2="874" stroke="#000" stroke-width="1"/>
<text x="423.0" y="885" class="ax">26 Mar 21:11</text>
<line x1="499.2" y1="869" x2="499.2" y2="874" stroke="#000" stroke-width="1"/>
<text x="498.7" y="885" class="ax">26 Mar 21:19</text>
<line x1="575.0" y1="869" x2="575.0" y2="874" stroke="#000" stroke-width="1"/>
<text x="574.5" y="885" class="ax">26 Mar 21:27</text>
<line x1="650.7" y1="869" x2="650.7" y2="874" stroke="#000" stroke-width="1"/>
<text x="650.2" y="885" class="ax">26 Mar 21:35</text>
<line x1="726.4" y1="869" x2="726.4" y2="874" stroke="#000" stroke-width="1"/>
<text x="725.9" y="885" class="ax">26 Mar 21:43</text>
<line x1="802.1" y1="869" x2="802.1" y2="874" stroke="#000" stroke-width="1"/>
<text x="801.6" y="885" class="ax">26 Mar 21:51</text>
<line x1="877.8" y1="869" x2="877.8" y2="874" stroke="#000" stroke-width="1"/>
<text x="877.3" y="885" class="ax">26 Mar 21:59</text>
<line x1="953.6" y1="869" x2="953.6" y2="874" stroke="#000" stroke-width="1"/>
<text x="953.1" y="885" class="ax">26 Mar 22:07</text>
<line x1="1029.3" y1="869" x2="1029.3" y2="874" stroke="#000" stroke-width="1"/>
<text x="1028.8" y="885" class="ax">26 Mar 22:15</text>
<line x1="1105.0" y1="869" x2="1105.0" y2="874" stroke="#000" stroke-width="1"/>
<text x="1104.5" y="885" class="ax">26 Mar 22:23</text>
<line x1="1180.7" y1="869" x2="1180.7" y2="874" stroke="#000" stroke-width="1"/>
<text x="1180.2" y="885" class="ax">26 Mar 22:31</text>
<line x1="1256.4" y1="869" x2="1256.4" y2="874" stroke="#000" stroke-width="1"/>
<text x="1255.9" y="885" class="ax">26 Mar 22:39</text>
<line x1="1332.2" y1="869" x2="1332.2" y2="874" stroke="#000" stroke-width="1"/>
<text x="1331.7" y="885" class="ax">26 Mar 22:47</text>
<line x1="1407.9" y1="869" x2="1407.9" y2="874" stroke="#000" stroke-width="1"/>
<text x="1407.4" y="885" class="ax">26 Mar 22:55</text>
<line x1="1483.6" y1="869" x2="1483.6" y2="874" stroke="#000" stroke-width="1"/>
<text x="1483.1" y="885" class="ax">26 Mar 23:03</text>
<line x1="1559.3" y1="869" x2="1559.3" y2="874" stroke="#000" stroke-width="1"/>
<text x="1558.8" y="885" class="ax">26 Mar 23:11</text>
<line x1="1635.0" y1="869" x2="1635.0" y2="874" stroke="#000" stroke-width="1"/>
<text x="1634.5" y="885" class="ax">26 Mar 23:19</text>
<line x1="1710.8" y1="869" x2="1710.8" y2="874" stroke="#000" stroke-width="1"/>
<text x="1710.3" y="885" class="ax">26 Mar 23:27</text>
<line x1="1786.5" y1="869" x2="1786.5" y2="874" stroke="#000" stroke-width="1"/>
<text x="1786.0" y="885" class="ax">26 Mar 23:35</text>
<line x1="1862.2" y1="869" x2="1862.2" y2="874" stroke="#000" stroke-width="1"/>
<text x="1861.7" y="885" class="ax">26 Mar 23:43</text>
<line x1="1937.9" y1="869" x2="1937.9" y2="874" stroke="#000" stroke-width="1"/>
<text x="1937.4" y="885" class="ax">26 Mar 23:51</text>
<line x1="2013.6" y1="869" x2="2013.6" y2="874" stroke="#000" stroke-width="1"/>
<text x="2013.1" y="885" class="ax">26 Mar 23:59</text>
</svg>

</body></html>
